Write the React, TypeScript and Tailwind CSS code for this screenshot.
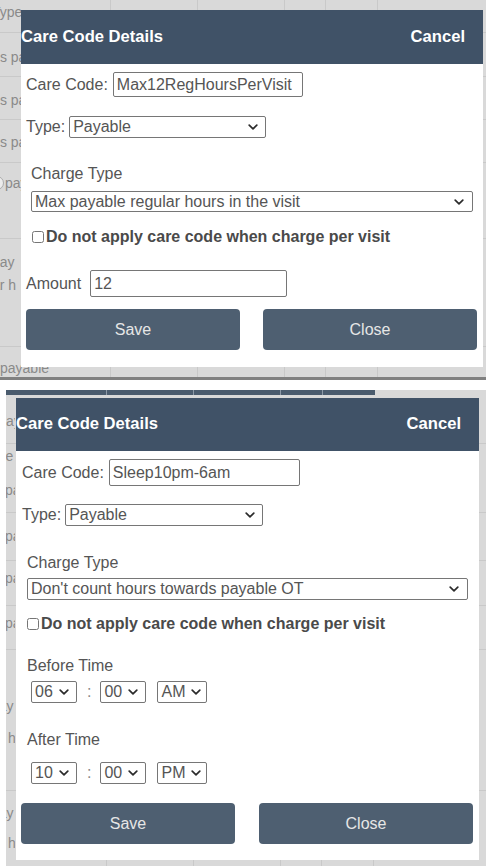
import React from "react";

const SANS = "font-['Liberation_Sans',Arial,Helvetica,sans-serif]";

function Chevron({ className = "" }: { className?: string }) {
  return (
    <svg width="10" height="6" viewBox="0 0 10 6" fill="none" className={className}>
      <path d="M1.2 1.2L5 4.8l3.8-3.6" stroke="#2b2b2b" strokeWidth="1.7" strokeLinecap="round" strokeLinejoin="round" />
    </svg>
  );
}

function Dropdown({ value, box, arrow = "right-[9px]" }: { value: string; box: string; arrow?: string }) {
  return (
    <div className={`relative shrink-0 ${box}`}>
      <select
        defaultValue={value}
        className="h-full w-full appearance-none rounded-[2px] border border-[#767676] bg-white pl-[3px] pr-[16px] text-[16px] leading-[18px] text-[#555] outline-none"
      >
        <option>{value}</option>
      </select>
      <Chevron className={`pointer-events-none absolute top-1/2 -translate-y-1/2 ${arrow}`} />
    </div>
  );
}

function Field({ value, box }: { value: string; box: string }) {
  return (
    <input
      readOnly
      value={value}
      className={`shrink-0 rounded-[2px] border border-[#767676] bg-white px-[3px] text-[16px] text-[#555] outline-none ${box}`}
    />
  );
}

function Header({ h }: { h: string }) {
  return (
    <div className={`flex items-center justify-between bg-[#405267] pr-[18px] text-[16.6px] font-bold text-white ${h}`}>
      <span>Care Code Details</span>
      <span>Cancel</span>
    </div>
  );
}

function NoVisitCharge({ className }: { className: string }) {
  return (
    <label className={`flex items-center text-[16px] font-bold leading-[18px] text-[#4a4a4a] ${className}`}>
      <input type="checkbox" className="m-0 mr-[2px] h-[12px] w-[12px]" />
      Do not apply care code when charge per visit
    </label>
  );
}

function Buttons({ className }: { className: string }) {
  return (
    <div className={`flex justify-between ${className}`}>
      <button className="h-[41px] w-[214px] rounded-[4px] bg-[#4e5f71] text-[16px] text-[#e6e6e6]">Save</button>
      <button className="h-[41px] w-[214px] rounded-[4px] bg-[#4e5f71] text-[16px] text-[#e6e6e6]">Close</button>
    </div>
  );
}

function TimePicker({ hour, minute, half, className }: { hour: string; minute: string; half: string; className: string }) {
  return (
    <div className={`flex items-center ${className}`}>
      <Dropdown value={hour} box="w-[46px] h-[22px]" arrow="right-[8px]" />
      <span className="ml-[10px] mr-[9px] text-[16px] text-[#888]">:</span>
      <Dropdown value={minute} box="w-[46px] h-[22px]" arrow="right-[8px]" />
      <span className="w-[11px]" />
      <Dropdown value={half} box="w-[50px] h-[22px]" arrow="right-[6px]" />
    </div>
  );
}

// greyed-out table that sits behind the dialog; only a thin strip of its
// first column shows, so the text is clipped to that strip
function BgRow({ h, first, clip, children }: { h: string; first: string; clip: string; children?: React.ReactNode }) {
  return (
    <div className={`flex shrink-0 border-b border-[#c9c9c9] ${h}`}>
      <div className={`shrink-0 border-r border-[#c9c9c9] ${first}`}>
        <div className={`flex h-full flex-col overflow-hidden ${clip}`}>{children}</div>
      </div>
      <div className="w-[87px] shrink-0 border-r border-[#c9c9c9]" />
      <div className="w-[87px] shrink-0 border-r border-[#c9c9c9]" />
      <div className="w-[41px] shrink-0 border-r border-[#c9c9c9]" />
      <div className="w-[52px] shrink-0 border-r border-[#c9c9c9]" />
      <div className="flex-1" />
    </div>
  );
}

function TopDialog() {
  return (
    <div className="relative h-[377px] overflow-hidden bg-[#d9d9d9]">
      <div className="flex flex-col text-[14px] leading-[18px] text-[#8a8a8a]">
        <BgRow h="h-[33px]" first="w-[111px]" clip="w-[21px]">
          <span className="-ml-[8px] mt-[3px] whitespace-nowrap">Type</span>
        </BgRow>
        <BgRow h="h-[44px]" first="w-[111px]" clip="w-[21px]">
          <span className="-ml-[4px] mt-[15px] whitespace-nowrap">Is pay</span>
        </BgRow>
        <BgRow h="h-[43px]" first="w-[111px]" clip="w-[21px]">
          <span className="-ml-[4px] mt-[14px] whitespace-nowrap">Is pay</span>
        </BgRow>
        <BgRow h="h-[43px]" first="w-[111px]" clip="w-[21px]">
          <span className="-ml-[4px] mt-[13px] whitespace-nowrap">Is pay</span>
        </BgRow>
        <BgRow h="h-[76px]" first="w-[111px]" clip="w-[21px]">
          <div className="-ml-[10px] mt-[11px] flex items-center whitespace-nowrap">
            <span className="h-[14px] w-[14px] shrink-0 rounded-full border border-[#aaa] bg-[#ececec]" />
            <span className="ml-[1px]">pay</span>
          </div>
        </BgRow>
        <BgRow h="h-[108px]" first="w-[111px]" clip="w-[21px]">
          <span className="-ml-[8px] mt-[14px] whitespace-nowrap">pay</span>
          <span className="-ml-[8px] mt-[5px] whitespace-nowrap">ar h</span>
        </BgRow>
        <BgRow h="h-[40px]" first="w-[111px]" clip="w-[111px]">
          <span className="mt-[12px] whitespace-nowrap">payable</span>
        </BgRow>
      </div>

      <div className="absolute left-[21px] top-[10px] w-[462px] bg-white">
        <Header h="h-[54px]" />
        <div className="pb-[17px] pl-[5px] pr-[6px] pt-[8px] text-[16px] leading-[18px] text-[#555]">
          <div className="flex h-[25px] items-center">
            <span>Care Code:</span>
            <Field value="Max12RegHoursPerVisit" box="ml-[5px] w-[190px] h-[25px]" />
          </div>
          <div className="mt-[19px] flex h-[22px] items-center">
            <span>Type:</span>
            <Dropdown value="Payable" box="ml-[4px] w-[197px] h-[22px]" arrow="right-[8px]" />
          </div>
          <div className="mt-[27px] pl-[5px]">
            <div>Charge Type</div>
            <Dropdown value="Max payable regular hours in the visit" box="mt-[8px] w-[442px] h-[21px]" arrow="right-[9px]" />
          </div>
          <NoVisitCharge className="mt-[16px] pl-[6px]" />
          <div className="mt-[24px] flex h-[27px] items-center">
            <span>Amount</span>
            <Field value="12" box="ml-[9px] w-[197px] h-[27px]" />
          </div>
          <Buttons className="mt-[12px]" />
        </div>
      </div>
    </div>
  );
}

function BottomDialog() {
  return (
    <div className="relative ml-[6px] h-[476px] overflow-hidden bg-[#d9d9d9]">
      <div className="flex flex-col text-[14px] leading-[18px] text-[#8a8a8a]">
        <div className="flex h-[5px] w-[369px] bg-[#4a5b6d]">
          <div className="w-[101px] border-r border-[#8d99a6]" />
          <div className="w-[87px] border-r border-[#8d99a6]" />
          <div className="w-[87px] border-r border-[#8d99a6]" />
          <div className="w-[42px] border-r border-[#8d99a6]" />
        </div>
        <div className="h-[3px]" />
        <BgRow h="h-[46px]" first="w-[101px]" clip="w-[9px]">
          <span className="-ml-[10px] mt-[14px] whitespace-nowrap">Day</span>
        </BgRow>
        <BgRow h="h-[69px]" first="w-[101px]" clip="w-[9px]">
          <span className="-ml-[23px] mt-[3px] whitespace-nowrap">Type</span>
          <span className="-ml-[1px] mt-[16px] whitespace-nowrap">pa</span>
        </BgRow>
        <BgRow h="h-[48px]" first="w-[101px]" clip="w-[9px]">
          <span className="-ml-[1px] mt-[14px] whitespace-nowrap">pa</span>
        </BgRow>
        <BgRow h="h-[45px]" first="w-[101px]" clip="w-[9px]">
          <span className="-ml-[1px] mt-[8px] whitespace-nowrap">pa</span>
        </BgRow>
        <BgRow h="h-[44px]" first="w-[101px]" clip="w-[9px]">
          <span className="-ml-[1px] mt-[8px] whitespace-nowrap">pa</span>
        </BgRow>
        <BgRow h="h-[141px]" first="w-[101px]" clip="w-[9px]">
          <span className="-ml-[15px] mt-[47px] whitespace-nowrap">pay</span>
          <span className="ml-[2px] mt-[14px] whitespace-nowrap">h</span>
        </BgRow>
        <BgRow h="h-[78px]" first="w-[101px]" clip="w-[9px]">
          <span className="-ml-[15px] mt-[13px] whitespace-nowrap">pay</span>
          <span className="ml-[2px] mt-[12px] whitespace-nowrap">h</span>
        </BgRow>
      </div>

      <div className="absolute left-[10px] top-[8px] w-[463px] bg-white">
        <Header h="h-[53px]" />
        <div className="pb-[16px] pl-[5px] pr-[6px] pt-[8px] text-[16px] leading-[18px] text-[#555]">
          <div className="flex h-[27px] items-center pl-[1px]">
            <span>Care Code:</span>
            <Field value="Sleep10pm-6am" box="ml-[5px] w-[191px] h-[27px]" />
          </div>
          <div className="mt-[18px] flex h-[22px] items-center pl-[1px]">
            <span>Type:</span>
            <Dropdown value="Payable" box="ml-[4px] w-[198px] h-[22px]" arrow="right-[8px]" />
          </div>
          <div className="mt-[28px] pl-[6px]">
            <div>Charge Type</div>
            <Dropdown value="Don't count hours towards payable OT" box="mt-[6px] w-[441px] h-[22px]" arrow="right-[9px]" />
          </div>
          <NoVisitCharge className="mt-[15px] pl-[6px]" />
          <div className="mt-[24px] pl-[6px]">
            <div>Before Time</div>
            <TimePicker hour="06" minute="00" half="AM" className="mt-[6px] pl-[4px]" />
          </div>
          <div className="mt-[28px] pl-[6px]">
            <div>After Time</div>
            <TimePicker hour="10" minute="00" half="PM" className="mt-[13px] pl-[4px]" />
          </div>
          <Buttons className="mt-[19px]" />
        </div>
      </div>
    </div>
  );
}

export default function App() {
  return (
    <div className={`w-[486px] bg-white ${SANS}`}>
      <TopDialog />
      <div className="h-[3px] bg-[#808080]" />
      <div className="h-[10px]" />
      <BottomDialog />
    </div>
  );
}
